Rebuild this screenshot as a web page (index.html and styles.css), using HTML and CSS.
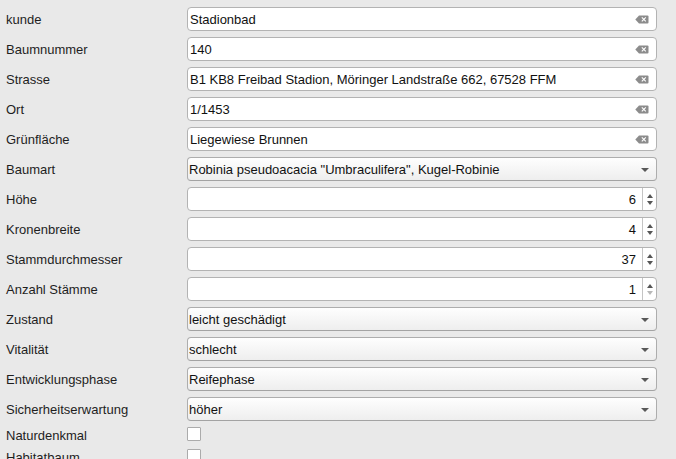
FILE: index.html
```html
<!DOCTYPE html>
<html lang="de">
<head>
<meta charset="utf-8">
<title>Baumkataster – Attribute</title>
<link rel="stylesheet" href="styles.css">
</head>
<body>
<form class="form">
  <label class="lbl">kunde</label>
  <div class="field text"><span class="val">Stadionbad</span><svg class="clear" viewBox="0 0 14 9" width="14" height="9"><path d="M4 0.5 H12.5 Q13.5 0.5 13.5 1.5 V7.5 Q13.5 8.5 12.5 8.5 H4 L0.3 4.5 Z" fill="#8c8c8c"/><path d="M6.8 2.3 L10.8 6.3 M10.8 2.3 L6.8 6.3" stroke="#fff" stroke-width="1.1"/></svg></div>

  <label class="lbl">Baumnummer</label>
  <div class="field text"><span class="val">140</span><svg class="clear" viewBox="0 0 14 9" width="14" height="9"><path d="M4 0.5 H12.5 Q13.5 0.5 13.5 1.5 V7.5 Q13.5 8.5 12.5 8.5 H4 L0.3 4.5 Z" fill="#8c8c8c"/><path d="M6.8 2.3 L10.8 6.3 M10.8 2.3 L6.8 6.3" stroke="#fff" stroke-width="1.1"/></svg></div>

  <label class="lbl">Strasse</label>
  <div class="field text"><span class="val">B1 KB8 Freibad Stadion, Möringer Landstraße 662, 67528 FFM</span><svg class="clear" viewBox="0 0 14 9" width="14" height="9"><path d="M4 0.5 H12.5 Q13.5 0.5 13.5 1.5 V7.5 Q13.5 8.5 12.5 8.5 H4 L0.3 4.5 Z" fill="#8c8c8c"/><path d="M6.8 2.3 L10.8 6.3 M10.8 2.3 L6.8 6.3" stroke="#fff" stroke-width="1.1"/></svg></div>

  <label class="lbl">Ort</label>
  <div class="field text"><span class="val">1/1453</span><svg class="clear" viewBox="0 0 14 9" width="14" height="9"><path d="M4 0.5 H12.5 Q13.5 0.5 13.5 1.5 V7.5 Q13.5 8.5 12.5 8.5 H4 L0.3 4.5 Z" fill="#8c8c8c"/><path d="M6.8 2.3 L10.8 6.3 M10.8 2.3 L6.8 6.3" stroke="#fff" stroke-width="1.1"/></svg></div>

  <label class="lbl">Grünfläche</label>
  <div class="field text"><span class="val">Liegewiese Brunnen</span><svg class="clear" viewBox="0 0 14 9" width="14" height="9"><path d="M4 0.5 H12.5 Q13.5 0.5 13.5 1.5 V7.5 Q13.5 8.5 12.5 8.5 H4 L0.3 4.5 Z" fill="#8c8c8c"/><path d="M6.8 2.3 L10.8 6.3 M10.8 2.3 L6.8 6.3" stroke="#fff" stroke-width="1.1"/></svg></div>

  <label class="lbl">Baumart</label>
  <div class="field combo"><span class="val">Robinia pseudoacacia "Umbraculifera", Kugel-Robinie</span><span class="caret"></span></div>

  <label class="lbl">Höhe</label>
  <div class="field spin"><span class="num">6</span><span class="steps"><span class="up"></span><span class="down"></span></span></div>

  <label class="lbl">Kronenbreite</label>
  <div class="field spin"><span class="num">4</span><span class="steps"><span class="up"></span><span class="down"></span></span></div>

  <label class="lbl">Stammdurchmesser</label>
  <div class="field spin"><span class="num">37</span><span class="steps"><span class="up"></span><span class="down"></span></span></div>

  <label class="lbl">Anzahl Stämme</label>
  <div class="field spin"><span class="num">1</span><span class="steps"><span class="up"></span><span class="down off"></span></span></div>

  <label class="lbl">Zustand</label>
  <div class="field combo"><span class="val">leicht geschädigt</span><span class="caret"></span></div>

  <label class="lbl">Vitalität</label>
  <div class="field combo"><span class="val">schlecht</span><span class="caret"></span></div>

  <label class="lbl">Entwicklungsphase</label>
  <div class="field combo"><span class="val">Reifephase</span><span class="caret"></span></div>

  <label class="lbl">Sicherheitserwartung</label>
  <div class="field combo"><span class="val">höher</span><span class="caret"></span></div>

  <label class="lbl small">Naturdenkmal</label>
  <div class="check-cell"><span class="check"></span></div>

  <label class="lbl small">Habitatbaum</label>
  <div class="check-cell"><span class="check"></span></div>
</form>
</body>
</html>
```

FILE: styles.css
```css
html, body {
  margin: 0;
  padding: 0;
  background: #e9e9e9;
  overflow: hidden;
}

body {
  font-family: "Liberation Sans", Arial, sans-serif;
  font-size: 13px;
  color: #1e1e1e;
}

.form {
  display: grid;
  grid-template-columns: 181px 470px;
  grid-template-rows: repeat(14, 24px) 16px 16px;
  row-gap: 6px;
  padding: 7px 19px 0 6px;
}

.lbl {
  align-self: center;
  white-space: nowrap;
  line-height: 16px;
  padding-top: 1px;
}

/* shared control frame */
.field {
  box-sizing: border-box;
  height: 24px;
  border: 1px solid #b3b3b3;
  border-radius: 4px;
  display: flex;
  align-items: center;
  color: #111;
}

.val {
  flex: 1;
  white-space: nowrap;
  overflow: hidden;
  padding-top: 1px;
}

/* line edit with clear button */
.text {
  background: #fff;
  padding: 0 7px 0 2px;
}

.clear {
  flex: none;
  display: block;
  margin-top: 1px;
}

/* combo box */
.combo {
  background: linear-gradient(#fefefe, #eeeeee);
  border-color: #adadad;
  border-bottom-color: #a3a3a3;
  padding: 0 7px 0 1px;
}

.caret {
  flex: none;
  width: 0;
  height: 0;
  border-left: 4px solid transparent;
  border-right: 4px solid transparent;
  border-top: 4px solid #585858;
  margin-top: 1px;
}

/* spin box */
.spin {
  background: #fff;
  padding: 0;
}

.num {
  flex: 1;
  text-align: right;
  padding-right: 6px;
  padding-top: 1px;
}

.steps {
  flex: none;
  box-sizing: border-box;
  width: 14px;
  height: 100%;
  border-left: 1px solid #c4c4c4;
  display: flex;
  flex-direction: column;
  align-items: center;
  justify-content: center;
  gap: 3px;
  padding-left: 1px;
}

.up, .down {
  width: 0;
  height: 0;
  border-left: 3px solid transparent;
  border-right: 3px solid transparent;
}

.up {
  border-bottom: 4px solid #555;
}

.down {
  border-top: 4px solid #555;
}

.down.off {
  border-top-color: #b8b8b8;
}

/* check boxes */
.form .small {
  align-self: start;
  height: 16px;
}

.check-cell {
  display: flex;
  align-items: flex-start;
  height: 16px;
}

.check {
  box-sizing: border-box;
  width: 14px;
  height: 14px;
  background: #fff;
  border: 1px solid #ababab;
  border-radius: 1px;
}
```
